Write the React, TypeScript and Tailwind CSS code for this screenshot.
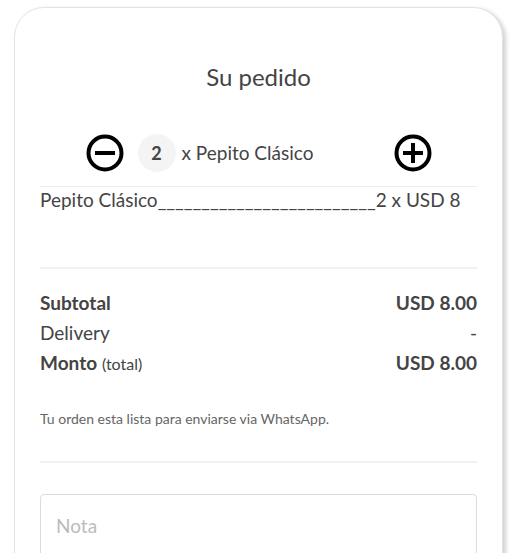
import React, { useState } from 'react';

const font = { fontFamily: 'Lato, "Open Sans", sans-serif' };

function CircleIcon({ plus }: { plus?: boolean }) {
  return (
    <svg viewBox="0 0 38 38" className="w-[38px] h-[38px]">
      <circle cx="19" cy="19" r="16.5" fill="none" stroke="#000" strokeWidth="4" />
      <line x1="9" y1="19" x2="29" y2="19" stroke="#000" strokeWidth="4" />
      {plus && <line x1="19" y1="9" x2="19" y2="29" stroke="#000" strokeWidth="4" />}
    </svg>
  );
}

export default function App() {
  const [qty, setQty] = useState(2);
  const price = 8;

  return (
    <div className="bg-white min-h-screen pt-[7px] pl-[14px]" style={font}>
      <div className="w-[489px] rounded-[30px] border border-[#e3e3e3] bg-white shadow-[3px_2px_4px_rgba(0,0,0,0.18)] px-[25px] pt-[53px] pb-10 text-[#444]">
        {/* Header */}
        <h2 className="text-center text-[24px] leading-8 text-[#444]">Su pedido</h2>

        {/* Quantity */}
        <div className="mt-[41px] mx-auto w-[346px] flex items-center">
          <button onClick={() => setQty(Math.max(1, qty - 1))}>
            <CircleIcon />
          </button>
          <div className="ml-[14px] w-[38px] h-[38px] rounded-full bg-[#f4f4f4] flex items-center justify-center text-[18px] font-bold text-[#444]">
            {qty}
          </div>
          <span className="ml-[6px] text-[19px]">x Pepito Clásico</span>
          <button className="ml-auto" onClick={() => setQty(qty + 1)}>
            <CircleIcon plus />
          </button>
        </div>

        <div className="mt-[14px] border-t border-[#ececec]" />

        {/* Items */}
        <div className="pt-[1px] text-[19px] leading-6 whitespace-nowrap">
          Pepito Clásico_________________________{qty} x USD {price}
        </div>

        <div className="mt-[55px] border-t-2 border-[#f2f2f2]" />

        {/* Totals */}
        <div className="mt-[19px] text-[19px] leading-[30px]">
          <div className="flex justify-between font-bold">
            <span>Subtotal</span>
            <span>USD 8.00</span>
          </div>
          <div className="flex justify-between">
            <span>Delivery</span>
            <span>-</span>
          </div>
          <div className="flex justify-between">
            <span>
              <b>Monto</b> <span className="text-[16px]">(total)</span>
            </span>
            <span className="font-bold">USD 8.00</span>
          </div>
        </div>

        <p className="mt-[29px] text-[14px] text-[#666]">
          Tu orden esta lista para enviarse via WhatsApp.
        </p>

        <div className="mt-[32px] border-t-2 border-[#f2f2f2]" />

        {/* Note */}
        <textarea
          placeholder="Nota"
          className="mt-[31px] w-full h-[110px] rounded-[4px] border border-[#dcdcdc] px-[15px] pt-[17px] text-[19px] placeholder:text-[#bbb] outline-none resize-none"
        />
      </div>
    </div>
  );
}
